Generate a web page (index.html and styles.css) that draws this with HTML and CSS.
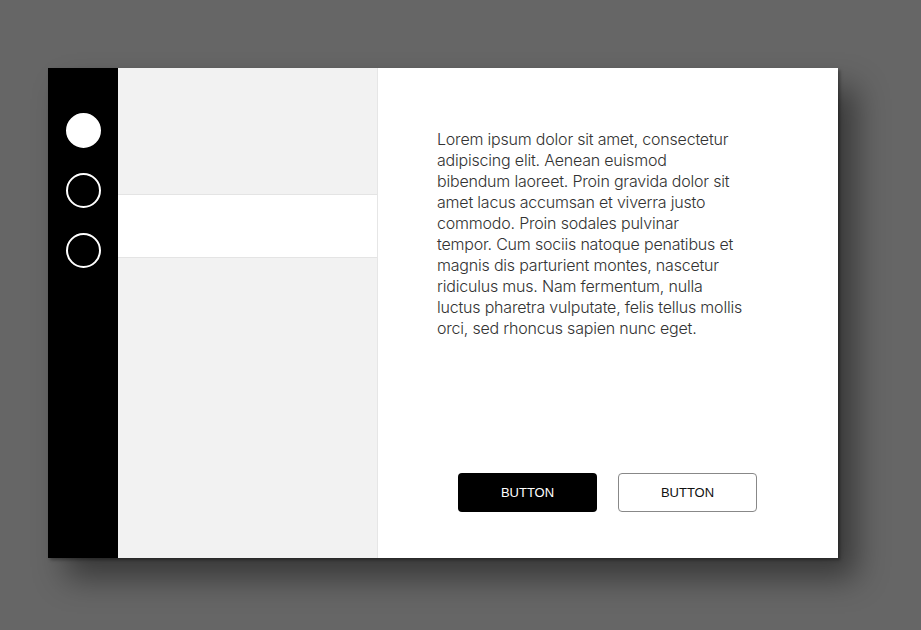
FILE: index.html
```html
<!DOCTYPE html>
<html lang="en">
<head>
  <meta charset="UTF-8">
  <title>Card</title>
  <link rel="stylesheet" href="styles.css">
</head>
<body>
  <div class="card">
    <div class="sidebar">
      <span class="dot active"></span>
      <span class="dot"></span>
      <span class="dot"></span>
    </div>
    <div class="media">
      <div class="block top"></div>
      <div class="spacer"></div>
      <div class="block bottom"></div>
    </div>
    <div class="content">
      <p class="text">Lorem ipsum dolor sit amet, consectetur<br>
        adipiscing elit. Aenean euismod<br>
        bibendum laoreet. Proin gravida dolor sit<br>
        amet lacus accumsan et viverra justo<br>
        commodo. Proin sodales pulvinar<br>
        tempor. Cum sociis natoque penatibus et<br>
        magnis dis parturient montes, nascetur<br>
        ridiculus mus. Nam fermentum, nulla<br>
        luctus pharetra vulputate, felis tellus mollis<br>
        orci, sed rhoncus sapien nunc eget.</p>
      <div class="actions">
        <button class="btn primary">BUTTON</button>
        <button class="btn secondary">BUTTON</button>
      </div>
    </div>
  </div>
</body>
</html>
```

FILE: styles.css
```css
body {
  background-color: #666;
  margin: 0;
  height: 630px;
  padding: 68px 0 0 48px;
  box-sizing: border-box;
  font-family: Inter, Roboto, "Liberation Sans", sans-serif;
}
.card {
  display: flex;
  width: 790px;
  height: 490px;
  background: white;
  box-shadow: 2px 2px 3px rgba(0, 0, 0, 0.35), 18px 20px 30px rgba(0, 0, 0, 0.45);
}
.sidebar {
  width: 70px;
  background: black;
  display: flex;
  flex-direction: column;
  align-items: center;
  gap: 25px;
  padding-top: 45px;
  box-sizing: border-box;
}
.dot {
  width: 35px;
  height: 35px;
  border-radius: 50%;
  border: 2px solid white;
  box-sizing: border-box;
}
.dot.active {
  background: white;
}
.media {
  width: 260px;
  display: flex;
  flex-direction: column;
  border-right: 1px solid #e6e6e6;
  box-sizing: border-box;
}
.block {
  background: #f2f2f2;
}
.block.top {
  height: 126px;
  border-bottom: 1px solid #e4e4e4;
}
.spacer {
  height: 62px;
  background: white;
}
.block.bottom {
  flex: 1;
  border-top: 1px solid #e4e4e4;
}
.content {
  flex: 1;
  display: flex;
  flex-direction: column;
  padding: 61px 60px 46px 59px;
}
.text {
  margin: 0;
  white-space: nowrap;
  font-size: 16px;
  font-weight: 300;
  line-height: 21px;
  letter-spacing: -0.2px;
  color: #333;
}
.actions {
  margin-top: auto;
  display: flex;
  justify-content: center;
  gap: 21px;
}
.btn {
  width: 139px;
  height: 39px;
  border-radius: 4px;
  font-family: "Liberation Sans", Arial, sans-serif;
  font-size: 13px;
  cursor: pointer;
}
.btn.primary {
  background: black;
  color: white;
  border: none;
}
.btn.secondary {
  background: white;
  color: #111;
  border: 1px solid #888;
}
```
